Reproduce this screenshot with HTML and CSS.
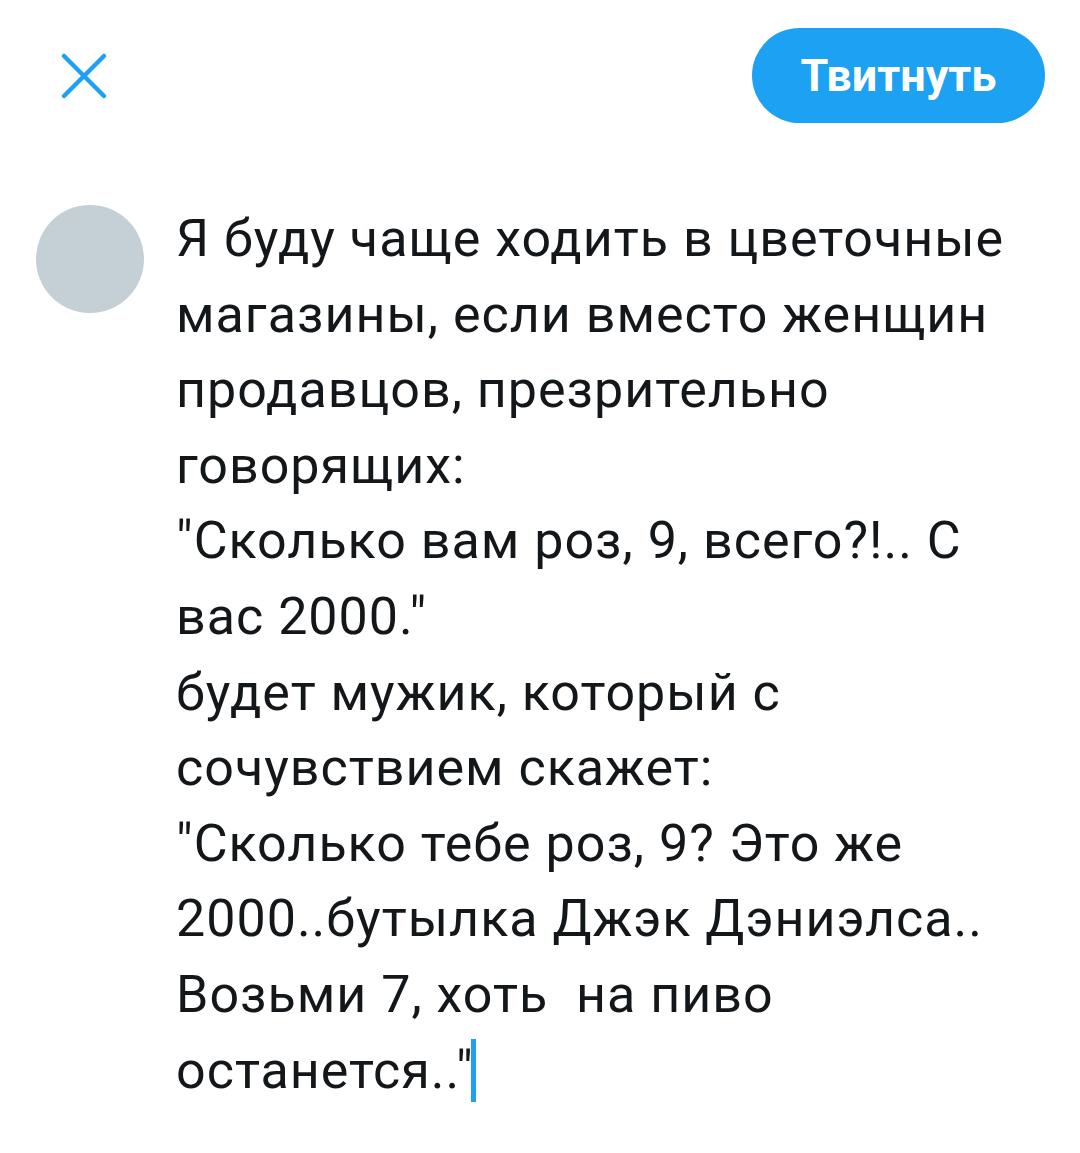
FILE: index.html
```html
<!DOCTYPE html>
<html lang="ru">
<head>
<meta charset="utf-8">
<link rel="stylesheet" href="styles.css">
</head>
<body>
<div class="page">
  <header class="topbar">
    <div class="close">
      <svg width="48" height="48" viewBox="0 0 48 48"><path d="M4 4 L44 44 M44 4 L4 44" stroke="#1DA1F2" stroke-width="4.5" stroke-linecap="round" fill="none"/></svg>
    </div>
    <button class="tweet">Твитнуть</button>
  </header>
  <main class="compose">
    <div class="avatar"></div>
    <div class="text">Я буду чаще ходить в цветочные магазины, если вместо женщин продавцов, презрительно говорящих:<br>"Сколько вам роз, 9, всего?!.. С вас 2000."<br>будет мужик, который с сочувствием скажет:<br>"Сколько тебе роз, 9? Это же 2000..бутылка Джэк Дэниэлса.. Возьми 7, хоть&nbsp; на пиво останется.."<span class="caret"></span></div>
  </main>
</div>
</body>
</html>
```
FILE: styles.css
```css
html, body {
  margin: 0;
  padding: 0;
  background: #ffffff;
}
.page {
  width: 1080px;
  height: 1153px;
  font-family: Roboto, "Noto Sans", sans-serif;
}
.topbar {
  display: flex;
  justify-content: space-between;
  align-items: center;
  padding: 28px 35px 0 60px;
  height: 95px;
}
.close {
  width: 48px;
  height: 48px;
  display: flex;
}
.tweet {
  width: 293px;
  height: 95px;
  border: none;
  border-radius: 48px;
  background: #1DA1F2;
  color: #ffffff;
  font-family: Roboto, "Liberation Sans", sans-serif;
  font-weight: 700;
  font-size: 45px;
  padding: 0;
}
.compose {
  display: flex;
  align-items: flex-start;
  padding: 82px 0 0 36px;
  gap: 32px;
}
.avatar {
  flex: none;
  width: 108px;
  height: 108px;
  border-radius: 50%;
  background: #C4CFD6;
}
.text {
  width: 850px;
  color: #14171A;
  font-size: 52px;
  letter-spacing: 1px;
  line-height: 75.6px;
  margin-top: -4px;
}
.caret {
  display: inline-block;
  width: 5px;
  height: 63px;
  background: #1DA1F2;
  vertical-align: -14px;
  margin-left: -3px;
}
```
